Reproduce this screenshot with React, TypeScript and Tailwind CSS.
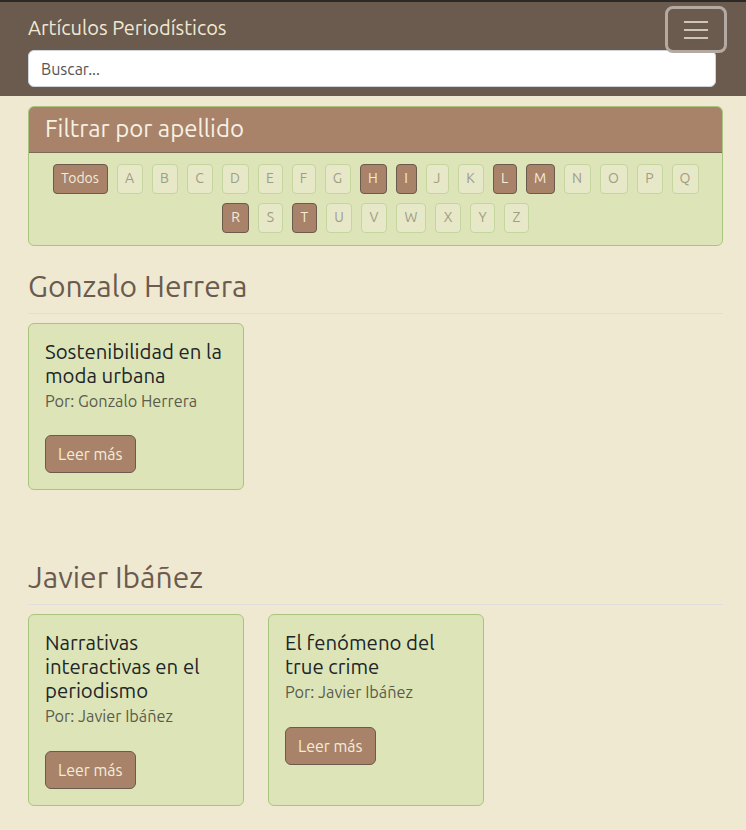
import React from "react";

const FONT = { fontFamily: '"Ubuntu", "Open Sans", sans-serif' };

const letters: { l: string; w: string; active?: boolean }[] = [
  { l: "Todos", w: "w-[55px]", active: true },
  { l: "A", w: "w-[26px]" },
  { l: "B", w: "w-[26px]" },
  { l: "C", w: "w-[26px]" },
  { l: "D", w: "w-[27px]" },
  { l: "E", w: "w-[25px]" },
  { l: "F", w: "w-[24px]" },
  { l: "G", w: "w-[26px]" },
  { l: "H", w: "w-[27px]", active: true },
  { l: "I", w: "w-[21px]", active: true },
  { l: "J", w: "w-[23px]" },
  { l: "K", w: "w-[26px]" },
  { l: "L", w: "w-[24px]", active: true },
  { l: "M", w: "w-[29px]", active: true },
  { l: "N", w: "w-[27px]" },
  { l: "O", w: "w-[28px]" },
  { l: "P", w: "w-[26px]" },
  { l: "Q", w: "w-[27px]" },
  { l: "R", w: "w-[27px]", active: true },
  { l: "S", w: "w-[25px]" },
  { l: "T", w: "w-[25px]", active: true },
  { l: "U", w: "w-[26px]" },
  { l: "V", w: "w-[26px]" },
  { l: "W", w: "w-[30px]" },
  { l: "X", w: "w-[26px]" },
  { l: "Y", w: "w-[25px]" },
  { l: "Z", w: "w-[25px]" },
];

function ArticleCard({ title, author }: { title: string; author: string }) {
  return (
    <div className="w-[216px] rounded-[6px] border border-[#a9c47f] bg-[#dde5b8] px-4 pt-4 pb-4 flex flex-col">
      <h5 className="text-[20.4px] leading-[24px] text-[#212529] mb-[3px]">{title}</h5>
      <div className="text-[16.3px] leading-[1.2] text-[#5a5c4c] mt-[1px]">{author}</div>
      <div className="mt-[24px]">
        <button className="h-[38px] px-3 rounded-[6px] border border-[#6b5a4e] bg-[#a8836a] text-[16px] text-[#f3ecd9]">
          Leer más
        </button>
      </div>
    </div>
  );
}

function Section({ name, articles, className }: { name: string; articles: string[]; className?: string }) {
  return (
    <section className={className}>
      <h2 className="text-[30px] leading-[1.2] text-[#6b5a4e] pb-[9px] border-b border-[#dfe0dc]">{name}</h2>
      <div className="mt-[9px] flex gap-[24px] items-stretch">
        {articles.map((a) => (
          <ArticleCard key={a} title={a} author={`Por: ${name}`} />
        ))}
      </div>
    </section>
  );
}

export default function App() {
  return (
    <div className="min-h-[830px] bg-[#f0e9d2]" style={FONT}>
      <nav className="bg-[#6b5a4e] border-t-2 border-[#2b2826] pl-[28px] pr-[19px] pb-[9px]">
        <div className="flex justify-between items-start h-[48px]">
          <span className="mt-[11px] text-[20px] leading-[30px] text-[#f0e9d2]">Artículos Periodísticos</span>
          <button className="mt-[4px] w-[62px] h-[47px] rounded-[8px] border-[3px] border-[#b5aaa2] flex flex-col items-center justify-center gap-[6px]">
            <span className="block w-[24px] h-[2px] bg-[#cfc4b9]" />
            <span className="block w-[24px] h-[2px] bg-[#cfc4b9]" />
            <span className="block w-[24px] h-[2px] bg-[#cfc4b9]" />
          </button>
        </div>
        <div className="mr-[11px] h-[37px] rounded-[6px] border border-[#ced4da] bg-white flex items-center px-3 text-[16px] text-[#555]">
          Buscar...
        </div>
      </nav>

      <main className="pl-[28px] pr-[23px] pt-[10px] pb-10">
        <div className="rounded-[6px] border border-[#a9c47f] bg-[#dde5b8] overflow-hidden">
          <div className="bg-[#a8836a] border-b border-[#7b6a5a] px-4 py-2 text-[24px] leading-[1.2] text-[#f7f1e3]">
            Filtrar por apellido
          </div>
          <div className="pt-[11px] pb-[12px] px-3 flex flex-wrap justify-center gap-[9px]">
            {letters.map((b) => (
              <button
                key={b.l}
                className={
                  b.active
                    ? `${b.w} h-[30px] rounded-[4px] border border-[#6b5a4e] bg-[#a8836a] text-[14px] text-[#f3ecd9] flex items-center justify-center`
                    : `${b.w} h-[30px] rounded-[4px] border border-[#c4d59e] bg-[#e7e8c8] text-[14px] text-[#a09d86] flex items-center justify-center`
                }
              >
                {b.l}
              </button>
            ))}
          </div>
        </div>

        <Section className="mt-[22px]" name="Gonzalo Herrera" articles={["Sostenibilidad en la moda urbana"]} />
        <Section className="mt-[69px]" name="Javier Ibáñez" articles={["Narrativas interactivas en el periodismo", "El fenómeno del true crime"]} />
      </main>
    </div>
  );
}
